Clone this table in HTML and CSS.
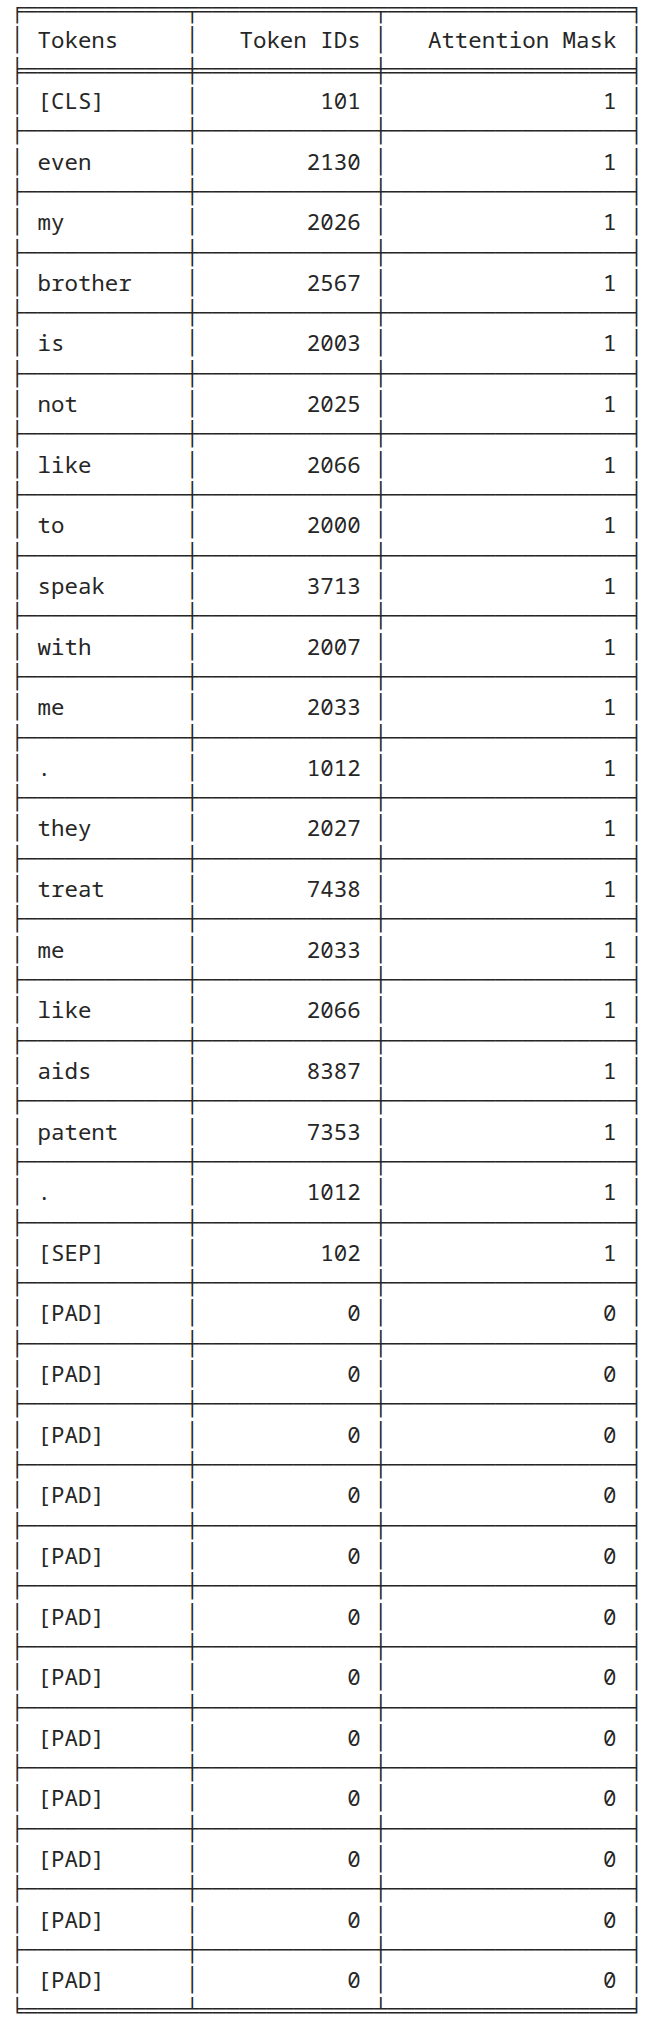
FILE: index.html
```html
<!DOCTYPE html>
<html lang="en">
<head>
<meta charset="utf-8">
<title>Tokens</title>
<link rel="stylesheet" href="styles.css">
</head>
<body>
<pre class="grid">╒════════════╤═════════════╤══════════════════╕
│ Tokens     │   Token IDs │   Attention Mask │
╞════════════╪═════════════╪══════════════════╡
│ [CLS]      │         101 │                1 │
├────────────┼─────────────┼──────────────────┤
│ even       │        2130 │                1 │
├────────────┼─────────────┼──────────────────┤
│ my         │        2026 │                1 │
├────────────┼─────────────┼──────────────────┤
│ brother    │        2567 │                1 │
├────────────┼─────────────┼──────────────────┤
│ is         │        2003 │                1 │
├────────────┼─────────────┼──────────────────┤
│ not        │        2025 │                1 │
├────────────┼─────────────┼──────────────────┤
│ like       │        2066 │                1 │
├────────────┼─────────────┼──────────────────┤
│ to         │        2000 │                1 │
├────────────┼─────────────┼──────────────────┤
│ speak      │        3713 │                1 │
├────────────┼─────────────┼──────────────────┤
│ with       │        2007 │                1 │
├────────────┼─────────────┼──────────────────┤
│ me         │        2033 │                1 │
├────────────┼─────────────┼──────────────────┤
│ .          │        1012 │                1 │
├────────────┼─────────────┼──────────────────┤
│ they       │        2027 │                1 │
├────────────┼─────────────┼──────────────────┤
│ treat      │        7438 │                1 │
├────────────┼─────────────┼──────────────────┤
│ me         │        2033 │                1 │
├────────────┼─────────────┼──────────────────┤
│ like       │        2066 │                1 │
├────────────┼─────────────┼──────────────────┤
│ aids       │        8387 │                1 │
├────────────┼─────────────┼──────────────────┤
│ patent     │        7353 │                1 │
├────────────┼─────────────┼──────────────────┤
│ .          │        1012 │                1 │
├────────────┼─────────────┼──────────────────┤
│ [SEP]      │         102 │                1 │
├────────────┼─────────────┼──────────────────┤
│ [PAD]      │           0 │                0 │
├────────────┼─────────────┼──────────────────┤
│ [PAD]      │           0 │                0 │
├────────────┼─────────────┼──────────────────┤
│ [PAD]      │           0 │                0 │
├────────────┼─────────────┼──────────────────┤
│ [PAD]      │           0 │                0 │
├────────────┼─────────────┼──────────────────┤
│ [PAD]      │           0 │                0 │
├────────────┼─────────────┼──────────────────┤
│ [PAD]      │           0 │                0 │
├────────────┼─────────────┼──────────────────┤
│ [PAD]      │           0 │                0 │
├────────────┼─────────────┼──────────────────┤
│ [PAD]      │           0 │                0 │
├────────────┼─────────────┼──────────────────┤
│ [PAD]      │           0 │                0 │
├────────────┼─────────────┼──────────────────┤
│ [PAD]      │           0 │                0 │
├────────────┼─────────────┼──────────────────┤
│ [PAD]      │           0 │                0 │
├────────────┼─────────────┼──────────────────┤
│ [PAD]      │           0 │                0 │
╘════════════╧═════════════╧══════════════════╛</pre>
</body>
</html>
```

FILE: styles.css
```css
html,
body {
  margin: 0;
  padding: 0;
  background: #ffffff;
}

.grid {
  margin: -5px 0 0 10.6px;
  padding: 0;
  font-family: "Noto Sans Mono", "DejaVu Sans Mono", monospace;
  font-size: 22.44px;
  font-feature-settings: "zero" 1;
  line-height: 30.32px;
  color: #262626;
  white-space: pre;
}
```
